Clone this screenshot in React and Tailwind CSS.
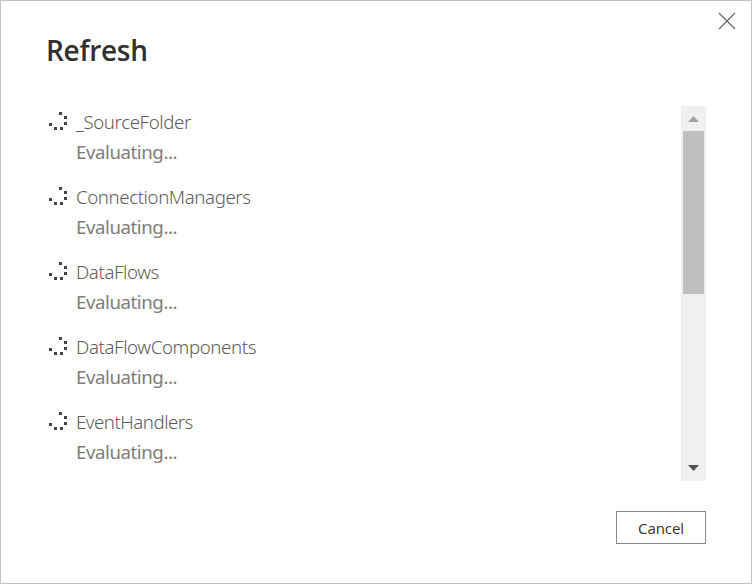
const items = [
  { name: '_SourceFolder', tracking: 'tracking-[-0.38px]' },
  { name: 'ConnectionManagers', tracking: 'tracking-[-0.4px]' },
  { name: 'DataFlows', tracking: 'tracking-[-0.4px]' },
  { name: 'DataFlowComponents', tracking: 'tracking-[-0.38px]' },
  { name: 'EventHandlers', tracking: 'tracking-[-0.5px]' },
];

function Spinner() {
  return (
    <svg width="18" height="18" viewBox="0 0 18 18" fill="#444" shapeRendering="crispEdges" className="mt-[5px] shrink-0">
      <rect x="10" y="0" width="3" height="3" />
      <rect x="15" y="4" width="3" height="3" />
      <rect x="15" y="10" width="3" height="3" />
      <rect x="0" y="11" width="3" height="3" />
      <rect x="5" y="15" width="3" height="3" />
      <rect x="11" y="15" width="3" height="3" />
    </svg>
  );
}

function Scrollbar() {
  return (
    <div className="flex h-full w-[25px] flex-col items-center bg-[#f0f0f0]">
      <div className="flex h-[25px] w-full shrink-0 items-start justify-center pt-[10px]">
        <svg width="11" height="6" viewBox="0 0 11 6" fill="#a3a3a3">
          <path d="M5.5 0L11 6H0Z" />
        </svg>
      </div>
      <div className="h-[163px] w-[21px] bg-[#bfbfbf]" />
      <div className="mt-auto flex h-[25px] w-full items-start justify-center pt-[9px]">
        <svg width="11" height="6" viewBox="0 0 11 6" fill="#505050">
          <path d="M0 0H11L5.5 6Z" />
        </svg>
      </div>
    </div>
  );
}

export default function App() {
  return (
    <div className="flex h-[584px] w-[752px] flex-col border border-[#c3c3c3] bg-white font-['Noto_Sans','Open_Sans',sans-serif]">
      <div className="flex h-[105px] shrink-0 items-start justify-between pl-[45px]">
        <h1 className="mt-[29px] font-['Open_Sans','Noto_Sans',sans-serif] text-[28px] leading-10 font-semibold tracking-[-0.3px] text-[#323130]">Refresh</h1>
        <button aria-label="Close" className="mt-[11px] mr-[15px]">
          <svg width="18" height="18" viewBox="0 0 18 18" stroke="#666" strokeWidth="1.2" fill="none">
            <path d="M1 1L17 17M17 1L1 17" />
          </svg>
        </button>
      </div>
      <div className="flex h-[375px] shrink-0 justify-between pr-[45px] pl-12">
        <ul className="flex flex-col gap-[15px] pt-px">
          {items.map((item) => (
            <li key={item.name} className="flex gap-[9px]">
              <Spinner />
              <div className="flex flex-col items-start text-[18.67px] leading-[30px]">
                <span className={`font-light text-[#5c5c5c] ${item.tracking}`}>{item.name}</span>
                <span className="tracking-[-0.43px] text-[#7d7d7d]">Evaluating...</span>
              </div>
            </li>
          ))}
        </ul>
        <Scrollbar />
      </div>
      <div className="flex justify-end pt-[30px] pr-[45px]">
        <button className="flex h-[33px] w-[90px] items-center justify-center border border-[#888] pt-px font-['Open_Sans','Noto_Sans',sans-serif] text-[15px] tracking-[-0.1px] text-[#333]">
          Cancel
        </button>
      </div>
    </div>
  );
}
